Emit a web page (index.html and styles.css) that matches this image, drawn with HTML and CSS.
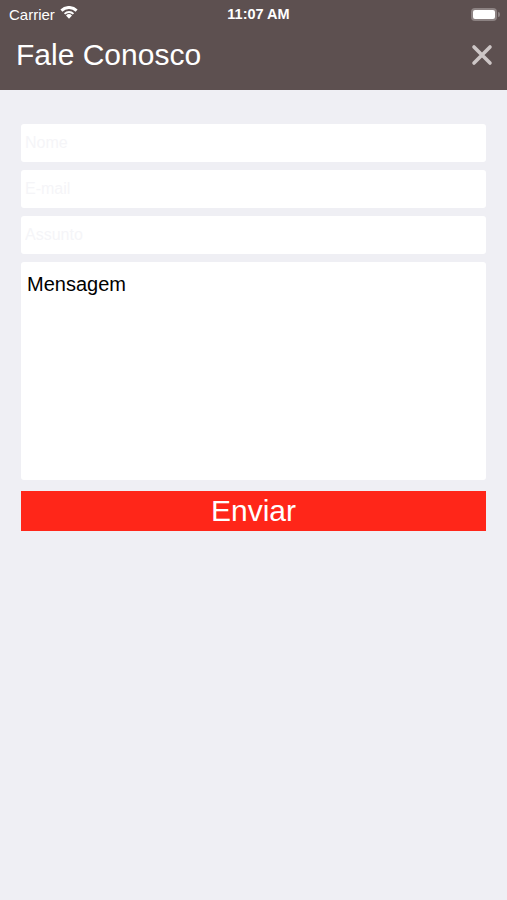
FILE: index.html
```html
<!DOCTYPE html>
<html lang="pt">
<head>
  <meta charset="UTF-8">
  <meta name="viewport" content="width=device-width, initial-scale=1.0">
  <title>Fale Conosco</title>
  <link rel="stylesheet" href="styles.css">
</head>
<body>

<!-- Top bar: status + navigation -->
<header class="top-bar">
  <div class="status-bar">
    <div class="status-left">
      <span>Carrier</span>
      <svg class="wifi" width="18" height="13" viewBox="0 0 18 13">
        <path d="M9 12.8 L6 9.5 A4.3 4.3 0 0 1 12 9.5 Z" fill="#fff"/>
        <path d="M3.9 7.2 A7.3 7.3 0 0 1 14.1 7.2 L12.8 8.6 A5.4 5.4 0 0 0 5.2 8.6 Z" fill="#fff"/>
        <path d="M0.4 3.6 A12 12 0 0 1 17.6 3.6 L15.6 5.8 A9.2 9.2 0 0 0 2.4 5.8 Z" fill="#fff"/>
      </svg>
    </div>
    <span class="clock">11:07 AM</span>
    <div class="battery">
      <span class="battery-level"></span>
    </div>
  </div>
  <nav class="nav-bar">
    <h1>Fale Conosco</h1>
    <button class="close-btn" aria-label="Fechar">
      <svg width="22" height="22" viewBox="0 0 22 22">
        <path d="M3 3 L19 19 M19 3 L3 19" stroke="#cdc6c6" stroke-width="3.6" stroke-linecap="round"/>
      </svg>
    </button>
  </nav>
</header>

<!-- Contact form -->
<form class="contact-form">
  <input type="text" placeholder="Nome">
  <input type="email" placeholder="E-mail">
  <input type="text" placeholder="Assunto">
  <textarea placeholder="Mensagem"></textarea>
  <button type="submit" class="send-btn">Enviar</button>
</form>

</body>
</html>
```

FILE: styles.css
```css
/* General */
body {
  margin: 0;
  background-color: #efeff4;
  font-family: 'Liberation Sans', Arial, sans-serif;
  min-height: 100vh;
}

/* Top bar */
.top-bar {
  background-color: #5d5050;
  color: #fff;
}

.status-bar {
  height: 28px;
  display: flex;
  align-items: center;
  justify-content: space-between;
  padding: 0 7px 0 9px;
  font-size: 15px;
}

.status-left {
  display: flex;
  align-items: center;
  gap: 5px;
  width: 120px;
}

.wifi {
  margin-top: -3px;
}

.clock {
  font-size: 14.5px;
  font-weight: bold;
  margin-left: 8px;
}

.battery {
  width: 120px;
  display: flex;
  justify-content: flex-end;
  position: relative;
}

.battery-level {
  display: block;
  width: 22px;
  height: 9px;
  background: #fff;
  border: 2px solid #8c8282;
  border-radius: 4px;
  margin-right: 3px;
}

.battery::after {
  content: "";
  position: absolute;
  right: 0;
  top: 4px;
  width: 2px;
  height: 5px;
  background: #8c8282;
  border-radius: 0 2px 2px 0;
}

.nav-bar {
  height: 62px;
  display: flex;
  align-items: center;
  justify-content: space-between;
  padding: 0 14px 0 16px;
}

.nav-bar h1 {
  margin: 0 0 8px;
  font-size: 30px;
  font-weight: normal;
}

.close-btn {
  background: none;
  border: none;
  padding: 0;
  margin-bottom: 8px;
  display: flex;
}

/* Form */
.contact-form {
  display: flex;
  flex-direction: column;
  gap: 8px;
  padding: 34px 21px 0 21px;
}

.contact-form input,
.contact-form textarea {
  background: #fff;
  border: none;
  border-radius: 3px;
  font-family: 'Liberation Sans', Arial, sans-serif;
  outline: none;
}

.contact-form input {
  height: 38px;
  padding: 0 4px;
  font-size: 16px;
}

.contact-form input::placeholder {
  color: #f5f5f8;
}

.contact-form textarea {
  height: 218px;
  padding: 11px 6px 9px;
  font-size: 20px;
  resize: none;
  box-sizing: border-box;
}

.contact-form textarea::placeholder {
  color: #000;
}

.send-btn {
  margin-top: 3px;
  height: 40px;
  background-color: #ff2619;
  color: #fff;
  border: none;
  font-family: 'Liberation Sans', Arial, sans-serif;
  font-size: 30px;
  padding: 0;
}
```
